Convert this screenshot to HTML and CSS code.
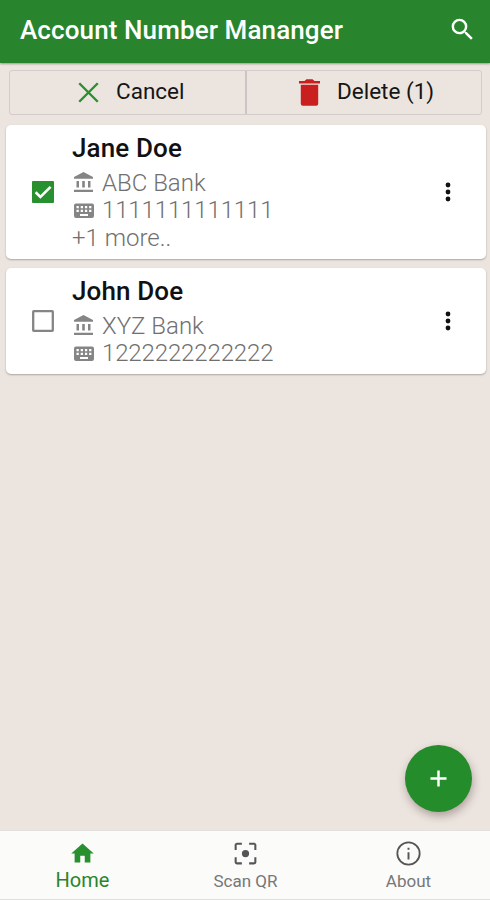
FILE: index.html
```html
<!DOCTYPE html>
<html lang="en">
<head>
<meta charset="utf-8">
<title>Account Number Mananger</title>
<link rel="stylesheet" href="styles.css">
</head>
<body>
<div class="app">
  <header class="topbar">
    <h1 class="title"><span>Account Number Mananger</span></h1>
    <svg class="search" viewBox="0 0 24 24"><path d="M15.5 14h-.79l-.28-.27A6.47 6.47 0 0 0 16 9.5 6.5 6.5 0 1 0 9.5 16c1.61 0 3.09-.59 4.23-1.57l.27.28v.79l5 4.99L20.49 19l-4.99-5zm-6 0a4.5 4.5 0 1 1 0-9 4.5 4.5 0 0 1 0 9z"/></svg>
  </header>
  <main class="content">
    <div class="actions">
      <button class="action cancel">
        <svg class="x-icon" viewBox="0 0 22 22"><path d="M1.3 1.3 20.7 20.7M20.7 1.3 1.3 20.7"/></svg>
        <span>Cancel</span>
      </button>
      <button class="action delete">
        <svg class="trash" viewBox="0 0 21 27"><path d="M0 2h5.500L7.500 .3h6L15.500 2H21v2.600H0zM1.800 5.800h17.400v19a2 2 0 0 1-2 2H3.800a2 2 0 0 1-2-2z"/></svg>
        <span>Delete (1)</span>
      </button>
    </div>
    <section class="card card-tall">
      <div class="check">
        <svg viewBox="0 0 22 22"><rect class="box-on" width="22" height="22" rx="1"/><path class="tick" d="M3.6 11.3 8.4 16 18.6 5.8"/></svg>
      </div>
      <div class="info">
        <h2 class="name"><span>Jane Doe</span></h2>
        <div class="row"><svg viewBox="0 0 24 24"><path d="M4.500 10v6.500h2.500V10H4.500zm5.700 0v6.500h2.600V10h-2.600zM2 21h19v-2.200H2V21zm14-11v6.500h2.500V10H16zM11.500 1 2 6v1.800h19V6l-9.500-5z"/></svg><span class="bank">ABC Bank</span></div>
        <div class="row"><svg viewBox="0 0 24 24"><path fill-rule="evenodd" d="M4 4.500h16a2 2 0 0 1 2 2v10.500a2 2 0 0 1-2 2H4a2 2 0 0 1-2-2V6.500a2 2 0 0 1 2-2zM4.500 7v2.300h2.300V7zm4.200 0v2.300h2.300V7zm4.200 0v2.300h2.300V7zm4.200 0v2.300h2.300V7zM4.500 10.700V13h2.300v-2.300zm4.200 0V13h2.300v-2.300zm4.200 0V13h2.300v-2.300zm4.200 0V13h2.300v-2.300zM8 15v2h8v-2z"/></svg><span class="number">1111111111111</span></div>
        <div class="row"><span class="more">+1 more..</span></div>
      </div>
      <svg class="menu" viewBox="0 0 6 20"><circle cx="3" cy="3" r="2.400"/><circle cx="3" cy="10" r="2.400"/><circle cx="3" cy="17" r="2.400"/></svg>
    </section>
    <section class="card card-short">
      <div class="check">
        <svg viewBox="0 0 22 22"><rect class="box-off" x="1.200" y="1.200" width="19.600" height="19.600" rx=".6"/></svg>
      </div>
      <div class="info">
        <h2 class="name"><span>John Doe</span></h2>
        <div class="row"><svg viewBox="0 0 24 24"><path d="M4.500 10v6.500h2.500V10H4.500zm5.700 0v6.500h2.600V10h-2.600zM2 21h19v-2.200H2V21zm14-11v6.500h2.500V10H16zM11.500 1 2 6v1.800h19V6l-9.500-5z"/></svg><span class="bank">XYZ Bank</span></div>
        <div class="row"><svg viewBox="0 0 24 24"><path fill-rule="evenodd" d="M4 4.500h16a2 2 0 0 1 2 2v10.500a2 2 0 0 1-2 2H4a2 2 0 0 1-2-2V6.500a2 2 0 0 1 2-2zM4.500 7v2.300h2.300V7zm4.200 0v2.300h2.300V7zm4.200 0v2.300h2.300V7zm4.200 0v2.300h2.300V7zM4.500 10.700V13h2.300v-2.300zm4.200 0V13h2.300v-2.300zm4.200 0V13h2.300v-2.300zm4.200 0V13h2.300v-2.300zM8 15v2h8v-2z"/></svg><span class="number">1222222222222</span></div>
      </div>
      <svg class="menu" viewBox="0 0 6 20"><circle cx="3" cy="3" r="2.400"/><circle cx="3" cy="10" r="2.400"/><circle cx="3" cy="17" r="2.400"/></svg>
    </section>
    <button class="fab"><svg viewBox="0 0 18 18"><path d="M9 .5v17M.5 9h17"/></svg></button>
  </main>
  <nav class="tabs">
    <a class="tab active"><svg viewBox="0 0 24 24"><path d="M10 20v-6h4v6h5v-8h3L12 3 2 12h3v8z"/></svg><span>Home</span></a>
    <a class="tab"><svg viewBox="0 0 24 24"><path d="M12 9a3 3 0 1 0 0 6 3 3 0 0 0 0-6zM4.700 15H3v4c0 1.100.9 2 2 2h4v-1.700H4.700V15zM4.700 4.700H9V3H5c-1.100 0-2 .9-2 2v4h1.700V4.700zM19 3h-4v1.700h4.300V9H21V5c0-1.100-.9-2-2-2zm.3 16.300H15V21h4c1.100 0 2-.9 2-2v-4h-1.700v4.300z"/></svg><span>Scan QR</span></a>
    <a class="tab"><svg viewBox="0 0 24 24"><path d="M11.200 11h1.600v6h-1.600zM11.200 7.200h1.600v1.700h-1.600zM12 2a10 10 0 1 0 0 20 10 10 0 0 0 0-20zm0 18.500a8.500 8.500 0 1 1 0-17 8.500 8.500 0 0 1 0 17z"/></svg><span>About</span></a>
  </nav>
</div>
</body>
</html>
```
FILE: styles.css
```css
* { box-sizing: border-box; }
body { margin: 0; font-family: Roboto, sans-serif; }
h1, h2 { margin: 0; }
svg { display: block; flex: none; }
button { font-family: inherit; border: 0; padding: 0; margin: 0; }
.app { width: 490px; height: 900px; display: flex; flex-direction: column; background: #ece4df; overflow: hidden; }
.topbar { height: 63px; flex: none; background: #28852e; display: flex; align-items: center; justify-content: space-between; padding: 0 13px 4px 20px; box-shadow: 0 1px 2px rgba(0,0,0,.35); }
.title { color: #fff; font-size: 26px; font-weight: 500; line-height: 32px; letter-spacing: .11px; white-space: nowrap; }
.search { width: 29px; height: 29px; fill: #fff; }
.content { flex: 1; position: relative; padding: 7px 4px 0 6px; }
.actions { display: flex; height: 45px; margin: 0 4px 10px 3px; border: 1px solid #d3cccb; border-radius: 3px; }
.action { flex: 1 1 0; min-width: 0; display: flex; align-items: center; background: transparent; color: #171514; font-size: 22.5px; line-height: 28px; white-space: nowrap; }
.action span { padding-bottom: 3px; }
.action.cancel { flex: none; width: 237px; border-right: 2px solid #cbc5c5; padding-left: 68px; gap: 17px; }
.action.delete { padding-left: 52px; gap: 17px; }
.x-icon { width: 21px; height: 21px; stroke: #28902f; stroke-width: 2.5; fill: none; }
.trash { width: 21px; height: 27px; fill: #c91f1f; }
.card { display: flex; align-items: center; background: #fff; border-radius: 5px; box-shadow: 0 1px 2px rgba(0,0,0,.28); margin-bottom: 9px; padding: 0 35px 0 26px; }
.card-tall { height: 134px; }
.card-short { height: 106px; }
.check svg { width: 22px; height: 22px; }
.box-on { fill: #28902f; }
.box-off { fill: none; stroke: #858585; stroke-width: 2.3; }
.tick { fill: none; stroke: #fff; stroke-width: 2.6; }
.info { align-self: flex-start; flex: 1; padding: 7px 0 0 18px; }
.name { font-size: 26px; font-weight: 500; line-height: 32px; letter-spacing: .12px; color: #111; margin-bottom: 5.7px; white-space: nowrap; }
.row { display: flex; align-items: center; height: 27.5px; font-size: 24px; font-weight: 300; line-height: 27px; color: #707070; white-space: nowrap; }
.row svg { width: 24px; height: 24px; fill: #858585; margin-right: 6px; }
.number { letter-spacing: -.13px; }
.menu { width: 6px; height: 20px; fill: #111; }
.fab { position: absolute; right: 18px; bottom: 18px; width: 67px; height: 67px; border-radius: 50%; background: #258c2b; display: flex; align-items: center; justify-content: center; box-shadow: 1px 4px 8px rgba(60,30,30,.34); }
.fab svg { width: 17px; height: 17px; stroke: #fff; stroke-width: 2.6; }
.tabs { height: 70px; flex: none; display: grid; grid-template-columns: repeat(3, 1fr); padding-left: 1px; background: #fbfbfa; border-top: 1px solid #e3e0dd; border-bottom: 1px solid #e0e0e0; }
.tab { display: flex; flex-direction: column; align-items: center; padding-top: 8px; color: #777; font-size: 17px; line-height: 24px; }
.tab svg { width: 29px; height: 29px; fill: #555; margin-bottom: 1px; }
.tab.active { color: #28852e; font-size: 20px; }
.tab.active svg { width: 27px; height: 27px; fill: #28902f; margin: 1px 0; }
```
